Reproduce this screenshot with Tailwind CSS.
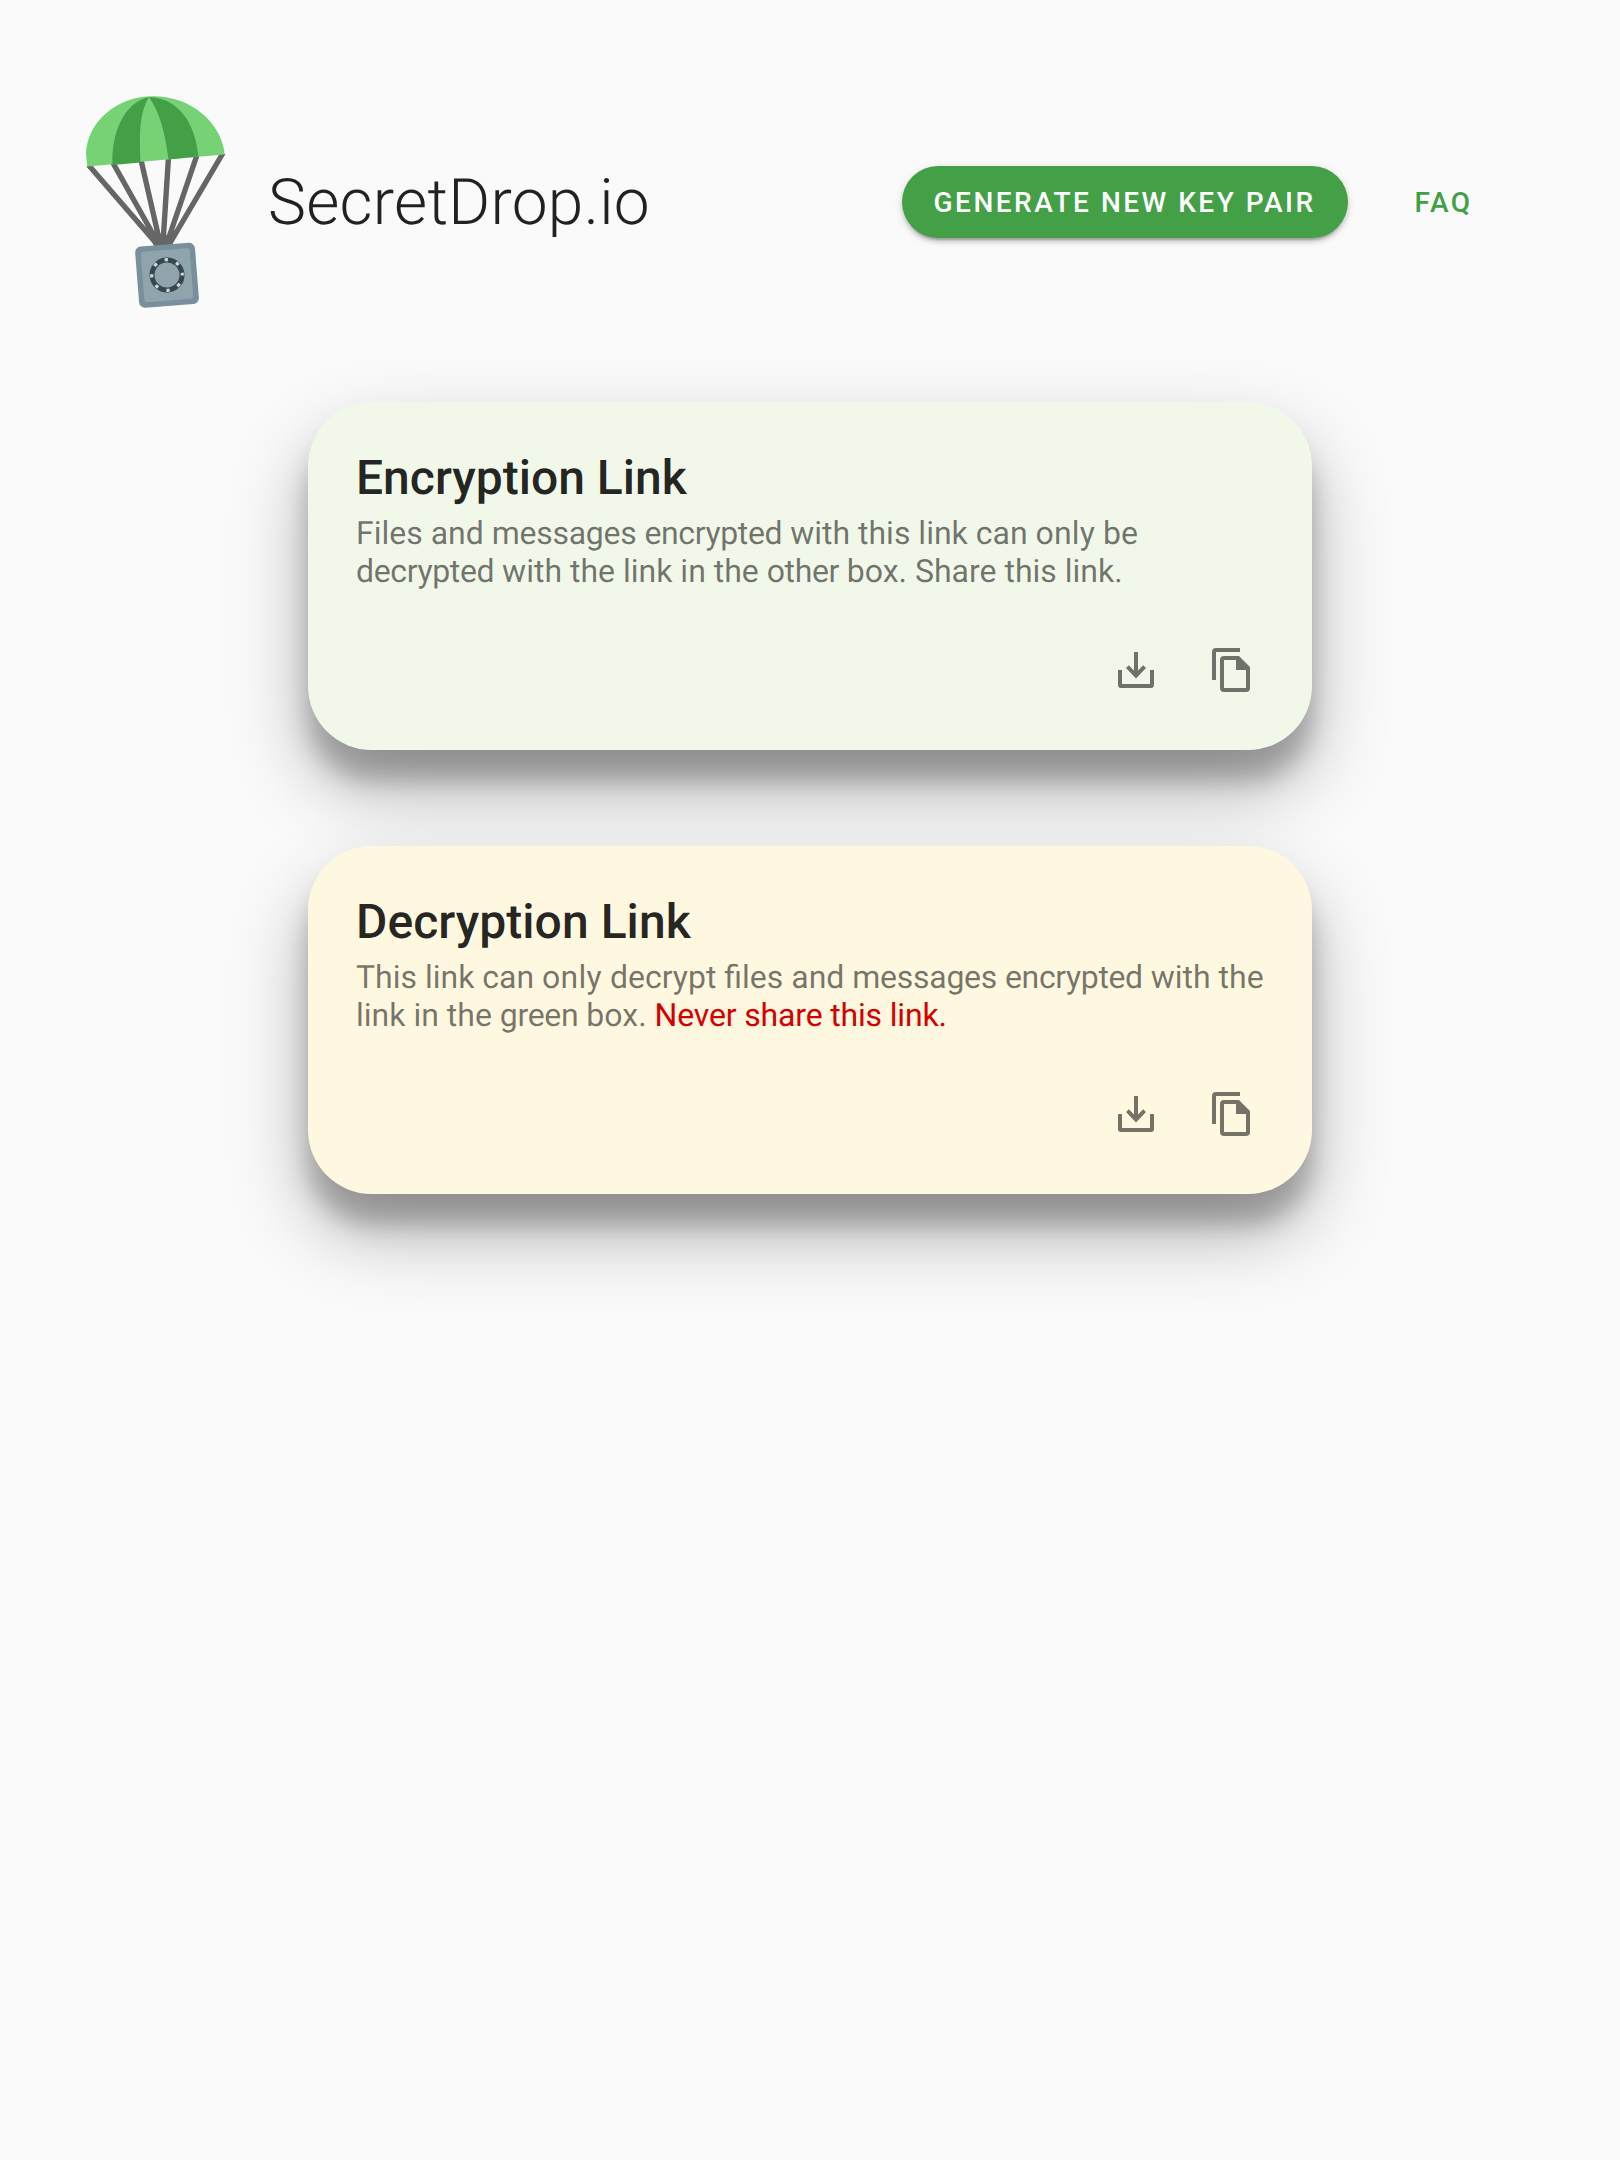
<!DOCTYPE html>
<html lang="en">
<head>
<meta charset="utf-8">
<title>SecretDrop.io</title>
<script src="https://cdn.jsdelivr.net/npm/@tailwindcss/browser@4"></script>
</head>
<body class="min-h-screen bg-[#fafafa] font-[Roboto,sans-serif] text-black/87 [text-rendering:geometricPrecision]">
<svg class="hidden">
  <symbol id="download" viewBox="0 0 24 24">
    <path d="M3 12h2v7h14v-7h2v7.500a1.500 1.500 0 0 1-1.500 1.500h-15A1.500 1.500 0 0 1 3 19.500zM11 3h2v9.200l2.600-2.600L17 11l-5 5.200L7 11l1.400-1.400 2.600 2.600z"/>
  </symbol>
  <symbol id="copy" viewBox="0 0 24 24">
    <path d="M16 1v2H4v14H2V3a2 2 0 0 1 2-2z"/>
    <path fill-rule="evenodd" d="M15.500 5 21 10.500V21a2 2 0 0 1-2 2H8a2 2 0 0 1-2-2V7a2 2 0 0 1 2-2zM14 7H8v14h11v-9h-5z"/>
  </symbol>
</svg>
<header class="flex h-[402px] items-start pl-[84px] pt-[94px]">
  <svg class="h-[216px] w-[144px] shrink-0" viewBox="84 94 144 216">
    <g stroke="#666" stroke-width="5.400">
      <path d="M88.500 165 156 243M113 163l45 80M141 160 160 243M168.500 157 163 243M197 155 167 243M223 153l-53 90" fill="none"/>
    </g>
    <path fill="#666" d="M149 235h28l-6 11h-17z"/>
    <path fill="#76d275" d="M87.300 166.500L86 154C87 122 116 97.500 150 96.200C190 94.500 220 122 224.300 151V154.500z"/>
    <path fill="#43a047" d="M112.500 165C111 132 125 102 149 97C138 115 140 140 140.500 162.500z"/>
    <path fill="#43a047" d="M149 97C178 98 195 122 198.500 156.500L168.500 159.500C165 133 160 113 149 97z"/>
    <g transform="rotate(-4.500 167 275)">
      <rect x="137" y="244.500" width="60" height="61.500" rx="6" fill="#78909c"/>
      <rect x="142.500" y="250" width="49" height="50.500" rx="2.500" fill="#90a4ae"/>
      <circle cx="167" cy="275" r="15" fill="none" stroke="#37474f" stroke-width="5"/>
      <circle cx="167" cy="275" r="15.300" fill="none" stroke="#cfd8dc" stroke-width="3.200" stroke-dasharray="3.400 8.617" stroke-dashoffset="1.700"/>
    </g>
  </svg>
  <h1 class="mt-[71px] ml-10 w-[634px] text-[64px] leading-[76px] font-light tracking-[0.27px]">SecretDrop.io</h1>
  <nav class="mt-[72px] flex gap-[34px] text-[28px] leading-[74px] font-medium tracking-[2.5px]">
    <button class="h-[72px] w-[446px] rounded-full bg-[#43a047] pl-[31.5px] text-left whitespace-nowrap text-white shadow-[0_6px_2px_-4px_rgb(0_0_0/0.2),0_4px_4px_0_rgb(0_0_0/0.14),0_2px_10px_0_rgb(0_0_0/0.12)]">GENERATE NEW KEY PAIR</button>
    <button class="h-[72px] pr-8 pl-[32.5px] text-[#43a047]">FAQ</button>
  </nav>
</header>
<main class="mx-auto flex w-[1004px] flex-col gap-24">
  <section class="h-[348px] rounded-[64px] bg-[#f1f8e9] px-12 pt-[44px] shadow-[0_38px_76px_rgb(0_0_0/0.3),0_30px_24px_rgb(0_0_0/0.22)]">
    <h2 class="text-5xl leading-[64px] font-medium">Encryption Link</h2>
    <p class="mt-1 text-[32px] leading-[38px] whitespace-nowrap text-black/54">Files and <span class="tracking-[-0.27px]">messages</span> <span class="tracking-[-0.37px]">encrypted</span> with this link can <span class="tracking-[0.2px]">only</span> be<br><span class="tracking-[-0.37px]">decrypted</span> with the link in the <span class="tracking-[-0.4px]">other</span> box. Share this link.</p>
    <div class="mt-[56px] flex justify-end gap-12 pr-2">
      <svg class="size-12 fill-black/54"><use href="#download"/></svg>
      <svg class="size-12 fill-black/54"><use href="#copy"/></svg>
    </div>
  </section>
  <section class="h-[348px] rounded-[64px] bg-[#fff8e1] px-12 pt-[44px] shadow-[0_38px_76px_rgb(0_0_0/0.3),0_30px_24px_rgb(0_0_0/0.22)]">
    <h2 class="text-5xl leading-[64px] font-medium tracking-[0.05px]">Decryption Link</h2>
    <p class="mt-1 text-[32px] leading-[38px] whitespace-nowrap text-black/54">This link can <span class="tracking-[0.25px]">only</span> decrypt files and <span class="tracking-[-0.27px]">messages</span> <span class="tracking-[-0.37px]">encrypted</span> with the<br>link in the <span class="tracking-[-0.3px]">green</span> box. <span class="tracking-[-0.16px] text-[#d50000]">Never share this link.</span></p>
    <div class="mt-[56px] flex justify-end gap-12 pr-2">
      <svg class="size-12 fill-black/54"><use href="#download"/></svg>
      <svg class="size-12 fill-black/54"><use href="#copy"/></svg>
    </div>
  </section>
</main>
</body>
</html>
